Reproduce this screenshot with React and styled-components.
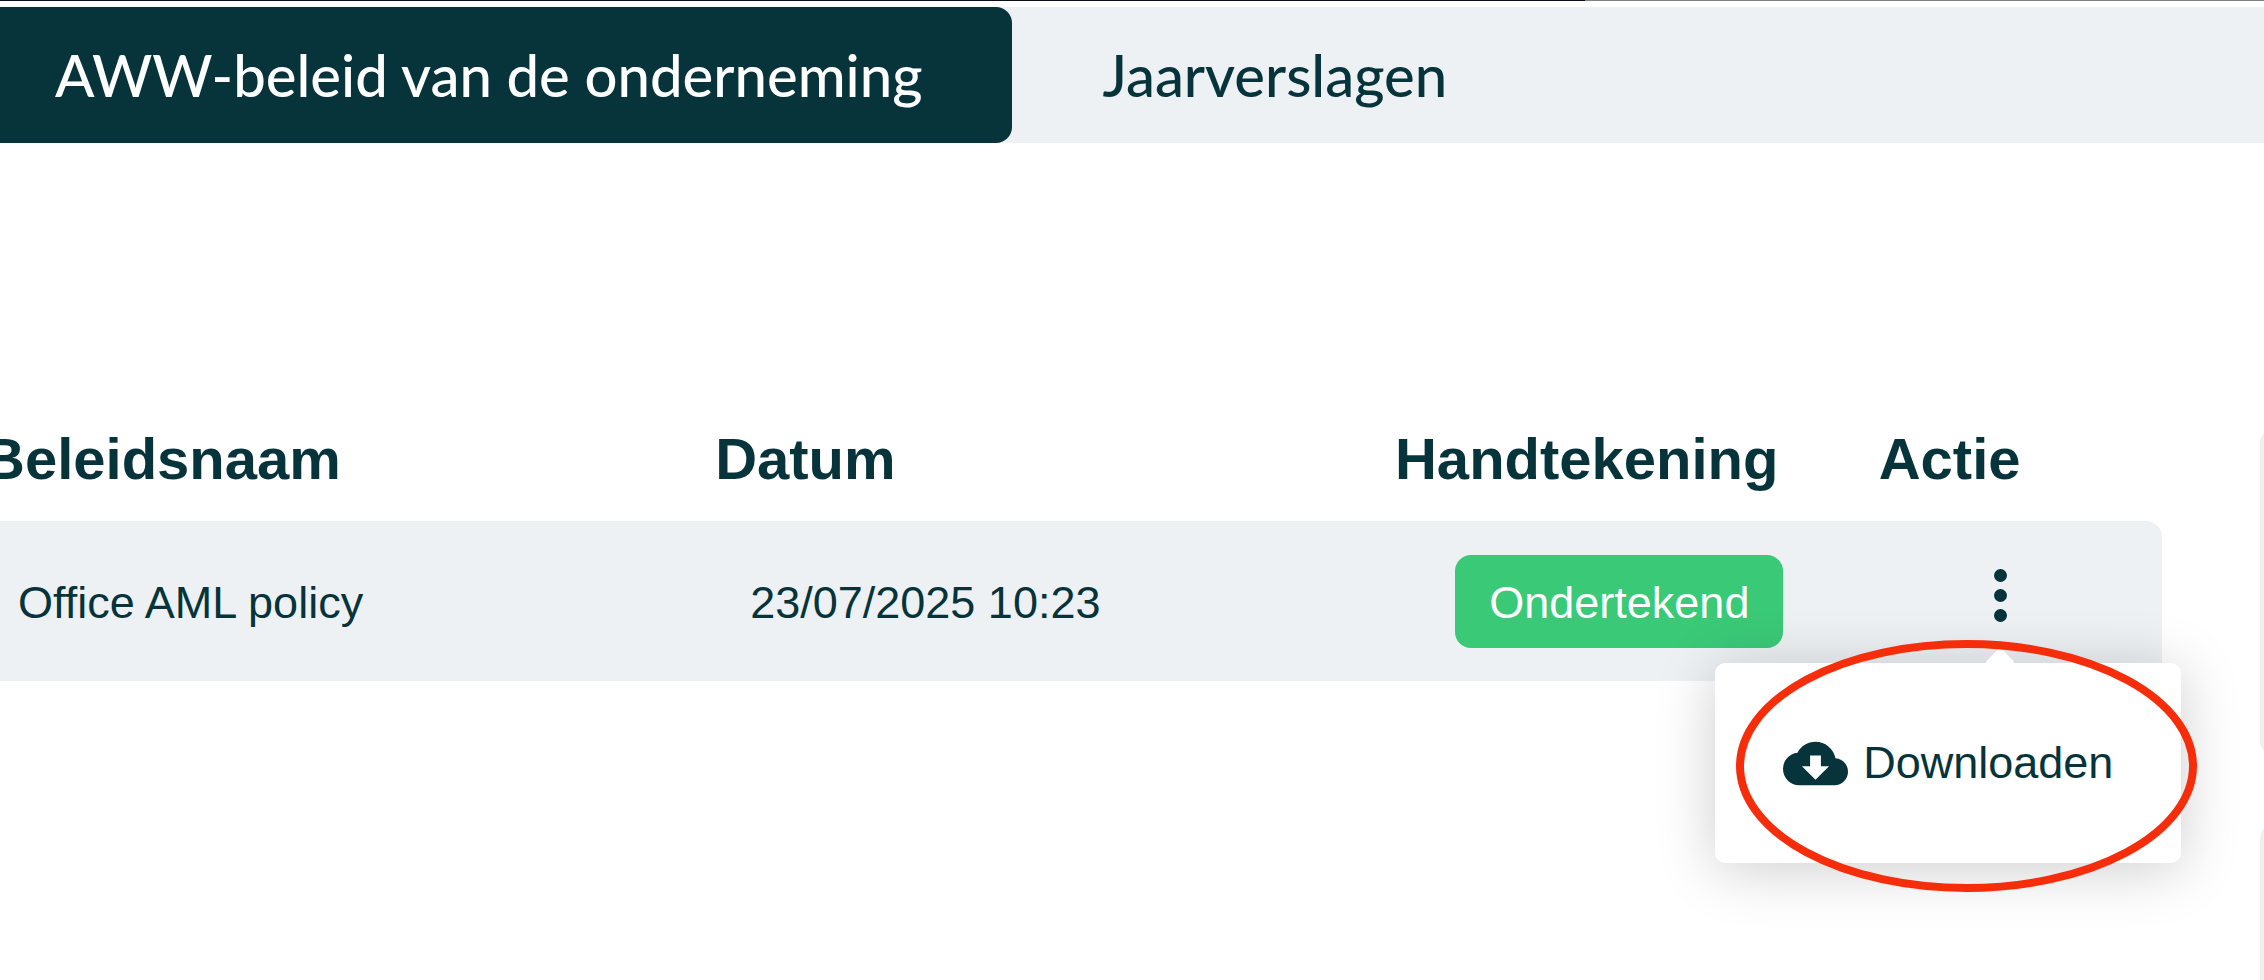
import React, { useState } from "react";
import styled, { createGlobalStyle } from "styled-components";
import { MdCloudDownload } from "react-icons/md";

const GlobalStyle = createGlobalStyle`
  *, *::before, *::after {
    box-sizing: border-box;
  }

  body {
    margin: 0;
    background: #fff;
    color: #07333b;
    font-family: "Liberation Sans", Arial, sans-serif;
  }

  button {
    border: 0;
    background: none;
    color: inherit;
    font-family: inherit;
    cursor: pointer;
  }
`;

const Page = styled.div`
  min-height: 100vh;
  display: flex;
  flex-direction: column;
  overflow: hidden;
`;

const TopLine = styled.div`
  height: 1px;
  margin-bottom: 6px;
  background: linear-gradient(to right, #0b0f1a 70%, #808080 70%);
`;

const TabBar = styled.nav`
  display: flex;
  margin-left: -35px;
  background: #edf1f4;
`;

const Tab = styled.button`
  padding: 32px 90px;
  border-radius: 16px;
  background: ${({ $active }) => ($active ? "#07333b" : "transparent")};
  color: ${({ $active }) => ($active ? "#fff" : "#07333b")};
  font-family: Lato, sans-serif;
  font-size: 58px;
  font-weight: 500;
  line-height: 72px;
  white-space: nowrap;
`;

const Content = styled.div`
  flex: 1;
  display: flex;
  gap: 98px;
  padding-top: 284px;
`;

const Main = styled.main`
  flex: 1;
  margin-left: -17px;
`;

const PolicyTable = styled.table`
  width: 100%;
  table-layout: fixed;
  border-collapse: separate;
  border-spacing: 0;
`;

const HeadCell = styled.th`
  width: ${({ $width }) => $width};
  padding: 0 0 30px;
  font-size: 58px;
  line-height: 64px;
  text-align: left;
  white-space: nowrap;
`;

const Cell = styled.td`
  height: 160px;
  padding: 4px 35px 0;
  background: #edf1f4;
  font-size: 45px;
  line-height: 64px;
  white-space: nowrap;
`;

const StatusCell = styled(Cell)`
  padding: 0 35px 0 0;
  text-align: center;
`;

const ActionCell = styled(Cell)`
  padding: 0 40px 14px 0;
  border-radius: 0 16px 16px 0;
  text-align: center;
`;

const Badge = styled.span`
  display: inline-block;
  padding: 16px 34px 13px;
  border-radius: 16px;
  background: #3ac977;
  color: #fff;
  vertical-align: middle;
`;

const ActionMenu = styled.div`
  position: relative;
  display: inline-block;
  vertical-align: middle;
`;

const DotsButton = styled.button`
  display: flex;
  flex-direction: column;
  align-items: center;
  justify-content: center;
  gap: 7px;
  width: 60px;
  height: 64px;
  padding: 0;
`;

const Dot = styled.span`
  width: 13px;
  height: 13px;
  border-radius: 50%;
  background: #07333b;
`;

const Popup = styled.div`
  position: absolute;
  top: 99px;
  right: -151px;
  z-index: 2;
  padding: 68px 68px 67px;
  border-radius: 10px;
  background: #fff;
  box-shadow: 0 6px 60px rgba(0, 0, 0, 0.2);

  &::before {
    content: "";
    position: absolute;
    top: -11px;
    right: 170px;
    width: 22px;
    height: 22px;
    border-radius: 4px;
    background: #fff;
    transform: rotate(45deg);
  }
`;

const PopupItem = styled.button`
  display: flex;
  align-items: center;
  gap: 15px;
  padding: 0;
  font-size: 45px;
  line-height: 64px;
`;

// Rode cirkel rond de downloadknop
const Highlight = styled.svg`
  position: absolute;
  top: -23px;
  left: 21px;
  width: 461px;
  height: 252px;
  overflow: visible;
  pointer-events: none;
`;

const SidePanel = styled.aside`
  width: 4px;
  display: flex;
  flex-direction: column;
  gap: 66px;
`;

const SideCard = styled.div`
  width: 400px;
  height: 330px;
  border-radius: 16px;
  background: #edf1f4;

  &:last-child {
    flex: 1;
    height: auto;
    border-radius: 16px 16px 0 0;
  }
`;

const tabs = ["AWW-beleid van de onderneming", "Jaarverslagen"];

const policies = [
  { name: "Office AML policy", date: "23/07/2025 10:23", status: "Ondertekend" },
];

const PolicyActions = () => {
  const [open, setOpen] = useState(true);

  return (
    <ActionMenu>
      <DotsButton
        aria-label="Acties"
        aria-expanded={open}
        onClick={() => setOpen(!open)}
      >
        <Dot />
        <Dot />
        <Dot />
      </DotsButton>
      {open && (
        <Popup>
          <PopupItem>
            <MdCloudDownload size={65} />
            Downloaden
          </PopupItem>
          <Highlight viewBox="0 0 461 252" aria-hidden="true">
            <ellipse
              cx="230.5"
              cy="126"
              rx="226.5"
              ry="122"
              fill="none"
              stroke="#f62d0a"
              strokeWidth="8"
            />
          </Highlight>
        </Popup>
      )}
    </ActionMenu>
  );
};

const App = () => {
  const [activeTab, setActiveTab] = useState(tabs[0]);

  return (
    <Page>
      <GlobalStyle />
      <TopLine />

      {/* Tabs */}
      <TabBar>
        {tabs.map((tab) => (
          <Tab
            key={tab}
            $active={tab === activeTab}
            onClick={() => setActiveTab(tab)}
          >
            {tab}
          </Tab>
        ))}
      </TabBar>

      <Content>
        <Main>
          <PolicyTable>
            <thead>
              <tr>
                <HeadCell $width="33.6%">Beleidsnaam</HeadCell>
                <HeadCell $width="31.2%">Datum</HeadCell>
                <HeadCell $width="22.2%">Handtekening</HeadCell>
                <HeadCell $width="13%">Actie</HeadCell>
              </tr>
            </thead>
            <tbody>
              {policies.map((policy) => (
                <tr key={policy.name}>
                  <Cell>{policy.name}</Cell>
                  <Cell>{policy.date}</Cell>
                  <StatusCell>
                    <Badge>{policy.status}</Badge>
                  </StatusCell>
                  <ActionCell>
                    <PolicyActions />
                  </ActionCell>
                </tr>
              ))}
            </tbody>
          </PolicyTable>
        </Main>

        {/* Kaarten rechts naast de tabel */}
        <SidePanel>
          <SideCard />
          <SideCard />
        </SidePanel>
      </Content>
    </Page>
  );
};

export default App;
